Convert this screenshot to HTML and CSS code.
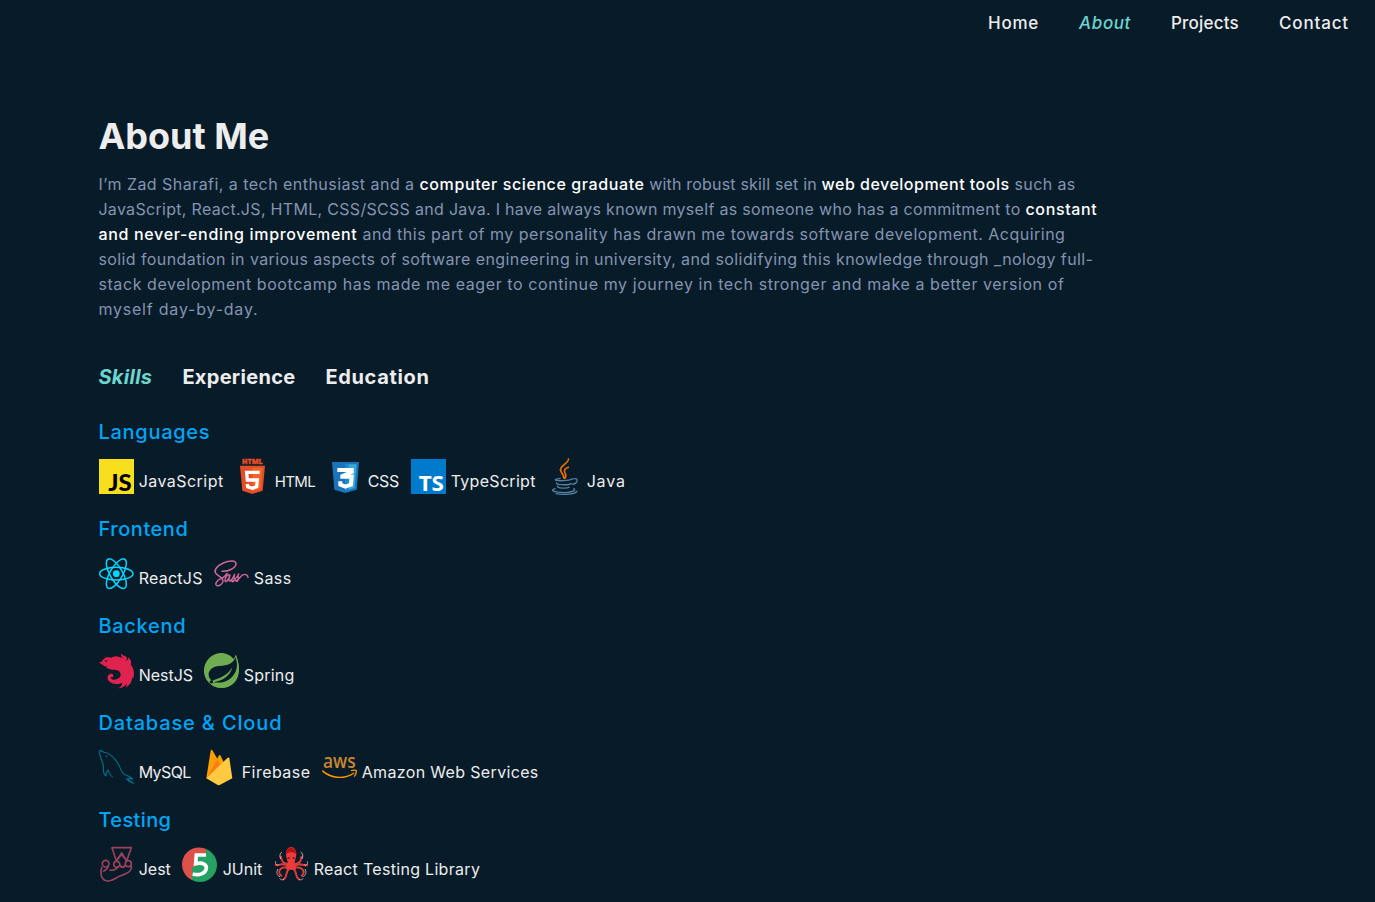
FILE: index.html
```
<!DOCTYPE html>
<html lang="en">
<head>
<meta charset="utf-8">
<title>About Me</title>
<link rel="stylesheet" href="styles.css">
</head>
<body>
<nav class="nav">
  <a class="nav-home">Home</a><a class="nav-about active">About</a><a class="nav-projects">Projects</a><a class="nav-contact">Contact</a>
</nav>
<main class="about">
  <h1 class="title">About Me</h1>
  <p class="bio">
    <span class="line"><span class="t46">I’m Zad Sharafi, a tech enthusiast and a </span><strong class="t60">computer science graduate</strong><span class="t19"> with robust skill set in </span><strong class="t49">web development tools</strong><span class="t38"> such as</span></span>
    <span class="line"><span class="t30">JavaScript, React.JS, HTML, CSS/SCSS and Java. I have always known myself as someone who has a commitment to </span><strong class="t65">constant</strong></span>
    <span class="line"><strong class="t68">and never-ending improvement</strong><span class="t49">&nbsp;and this part of my personality has drawn me towards software development. Acquiring</span></span>
    <span class="line t41">solid foundation in various aspects of software engineering in university, and solidifying this knowledge through _nology full-</span>
    <span class="line t59">stack development bootcamp has made me eager to continue my journey in tech stronger and make a better version of</span>
    <span class="line t79">myself day-by-day.</span>
  </p>
  <div class="tabs"><a class="active t30">Skills</a><a class="t30">Experience</a><a class="t65">Education</a></div>

  <section class="group">
    <h3 class="t73">Languages</h3>
    <div class="items">
      <div class="item w136">
        <svg class="icon" viewBox="27 27 105 105"><rect x="27" y="27" width="105" height="105" fill="#f7df1e"/><text class="logo js" x="55" y="122" font-size="66" textLength="70" lengthAdjust="spacingAndGlyphs">JS</text></svg>
        <span class="label t46">JavaScript</span>
      </div>
      <div class="item w93">
        <svg class="icon" viewBox="435 27 105 105"><text class="logo heavy" x="456" y="41" font-size="18" textLength="62" lengthAdjust="spacingAndGlyphs" fill="#e44d26" stroke="#e44d26">HTML</text><path fill="#e44d26" d="M450 47h75l-7 75-31 10-30-10z"/><path fill="#f16529" d="M487 53h31l-6 64-25 8z"/><path fill="none" stroke="#fff" stroke-width="10" d="M509 67h-39l2 23h30l-2 20-13 5-14-5-1-8"/></svg>
        <span class="label html">HTML</span>
      </div>
      <div class="item w83">
        <svg class="icon" viewBox="24 27 105 105"><path fill="#1b73ba" d="M36 36h81l-7 83-34 10-33-10z"/><path fill="#35a9dc" d="M76 43h34l-6 71-28 8z"/><path fill="#1c88c7" d="M76 43h10v78l-10 3z"/><path fill="none" stroke="#fff" stroke-width="12" d="M52 60h43v6L67 78v2h28l-2 24-17 6-15-6v-10"/></svg>
        <span class="label css">CSS</span>
      </div>
      <div class="item w136">
        <svg class="icon" viewBox="273 27 105 105"><rect x="273" y="27" width="105" height="105" fill="#007acc"/><text class="logo" x="296" y="122" font-size="64" textLength="76" lengthAdjust="spacingAndGlyphs" fill="#fff">TS</text></svg>
        <span class="label t30">TypeScript</span>
      </div>
      <div class="item">
        <svg class="icon" viewBox="51 27 105 105"><g fill="none" stroke="#e76f00" stroke-width="5"><path d="M115 25c6 14-32 23-22 40 4 7 9 11 9 21M117 51c-12 4-17 10-12 18 5 7 3 12-2 18"/></g><g fill="none" stroke="#5382a1" stroke-width="4"><path d="M92 85c-28 4-16 8 10 7 14 0 22-3 29-6M132 86c15-3 11 16-6 17M80 97c-7 9 36 9 45 3M83 107c-5 9 28 9 36 4M77 116c-35 9 38 17 55 6 4-3 1-6-2-7M77 131c25 4 62 2 64-8"/></g></svg>
        <span class="label t80">Java</span>
      </div>
    </div>
  </section>

  <section class="group">
    <h3 class="t56">Frontend</h3>
    <div class="items">
      <div class="item w115">
        <svg class="icon" viewBox="27 18 105 105"><circle cx="79" cy="71" r="10" fill="#00d8ff"/><g fill="none" stroke="#00d8ff" stroke-width="4.5"><ellipse cx="79" cy="71" rx="50" ry="19"/><ellipse cx="79" cy="71" rx="50" ry="19" transform="rotate(60 79 71)"/><ellipse cx="79" cy="71" rx="50" ry="19" transform="rotate(120 79 71)"/></g></svg>
        <span class="label t24">ReactJS</span>
      </div>
      <div class="item">
        <svg class="icon" viewBox="372 18 105 105"><g fill="none" stroke="#cd6799" stroke-width="4.5" stroke-linecap="round" stroke-linejoin="round"><path d="M396 64c19 1 42-10 42-23 0-10-20-10-38-2-18 8-28 20-24 29 5 10 23 14 23 25 0 9-12 16-18 14-8-3-2-15 12-21 8-4 15-9 18-16"/><path d="M420 76c-6-5-14 4-15 15 1 9 10 1 15-15-4 11-4 17-1 17 6-1 10-9 15-20-6 4 2 12-2 19-3 5-6 3-7 1 8 1 16-12 21-21-6 4 2 12-2 19-3 5-6 3-7 1 8 1 12-11 20-17 12-5 16 1 17 7"/></g></svg>
        <span class="label t46">Sass</span>
      </div>
    </div>
  </section>

  <section class="group">
    <h3 class="t73">Backend</h3>
    <div class="items">
      <div class="item w105">
        <svg class="icon" viewBox="27 24 105 105"><path fill="#e0234e" d="M27 53c7-1 9-5 12-9 7-8 15-8 23-6 9-5 18-6 27-2 4 1 7 3 10 4-6-5-7-10-4-15 1 8 10 7 14 11 5 4 1 9-3 11 8 0 10-5 8-10 8 6 11 13 9 23 10 12 11 29 6 43l-3-8c1 15-7 26-20 33 3-4 4-8 4-12-7 9-14 13-25 14 8-5 11-10 12-17-14 7-32 4-40-4-7-8-5-20 3-22 8-2 13 4 9 9-3 2-5 0-7 1 0 7 11 9 19 5 9-3 13-10 10-18-4-10-14-10-24-10-10-1-16-3-19-8l8-2c-8 1-14 1-16-3z"/><path d="M43 46l10 1-5 4z" fill="#081b29"/></svg>
        <span class="label">NestJS</span>
      </div>
      <div class="item">
        <svg class="icon" viewBox="342 24 105 105"><path fill="#70ad51" d="M437 30c7 20 15 46 5 69-8 19-27 30-47 30-17 0-32-7-42-20-22-29-9-68 22-81 22-9 43-1 56 14 3-4 5-8 6-12z"/><path fill="#081b29" d="M437 37c-12 27-34 24-56 27-24 4-31 25-20 39l5 5c22-9 45-14 61-41-7 27-29 40-57 45 41 5 59-15 68-35 4-12 4-24-1-40z"/><circle cx="364" cy="111" r="5" fill="#081b29"/><path fill="none" stroke="#70ad51" stroke-width="3" d="M437 31c9 25 12 45 2 69-8 17-24 27-44 27-13 0-24-3-34-12"/></svg>
        <span class="label t24">Spring</span>
      </div>
    </div>
  </section>

  <section class="group">
    <h3 class="t84">Database &amp; Cloud</h3>
    <div class="items">
      <div class="item w103">
        <svg class="icon" viewBox="27 24 105 105"><g fill="none" stroke="#00758f" stroke-width="3.2" stroke-linejoin="round"><path d="M48 102c-11-8-7-20-8-31-1-10-8-20-9-29-3-7-6-14-2-16 4-1 9 2 13 5 18 1 32 18 43 35 10 19 9 29 23 34 11 3 14 7 20 11-8-2-14-3-16 0 6 6 13 8 18 13-8-4-17-6-21-15M48 102c0-7 2-13 6-18 4 9 7 17 14 22M48 42l3 3"/></g></svg>
        <span class="label mysql">MySQL</span>
      </div>
      <div class="item w120">
        <svg class="icon" viewBox="336 24 105 105"><path fill="#ffa000" d="m349 109 13-83q2-5 6 0l14 24 4-9q3-4 6 0l29 63z"/><path fill="#f57f17" d="m349 109 33-58 12 25z"/><path fill="#ffca42" d="m349 109 63-61q4-3 6 1l9 60-38 20q-3 1-6 0z"/></svg>
        <span class="label t46">Firebase</span>
      </div>
      <div class="item">
        <svg class="icon" viewBox="696 24 105 105"><text class="aws" x="699" y="78" font-size="61" textLength="98" lengthAdjust="spacingAndGlyphs" fill="#c9862d">aws</text><path fill="#f90" d="M698 85c29 24 65 24 92 7 3-1 4 1 2 3-27 19-68 18-95-6-2-2-1-4 1-4z"/><path fill="none" stroke="#f90" stroke-width="4" d="M783 86c11-3 17-2 16 2 0 6-2 11-6 16"/></svg>
        <span class="label t35">Amazon Web Services</span>
      </div>
    </div>
  </section>

  <section class="group">
    <h3 class="t38">Testing</h3>
    <div class="items">
      <div class="item w84">
        <svg class="icon" viewBox="27 21 105 105"><g fill="none" stroke="#99425b" stroke-width="5" stroke-linejoin="round"><path d="M66 23h58l-14 39-15-23-16 23zM79 63l16-20 15 20M36 80c-7 17-4 41 17 43 14 1 23-9 37-15 20-7 36-12 34-32M55 77c0 8-8 13-16 18M58 90c8 2 23-1 27-10M89 75c5 9 12 9 17 0"/><circle cx="47" cy="71" r="10"/><circle cx="80" cy="73" r="9"/><circle cx="115" cy="71" r="9"/></g></svg>
        <span class="label">Jest</span>
      </div>
      <div class="item w91">
        <svg class="icon" viewBox="279 21 105 105"><circle cx="330" cy="75" r="51" fill="#25a162"/><path fill="#dc524a" d="M306 120a51 51 0 0 1 42-93v14h-32v40h-10z"/><path fill="none" stroke="#fff" stroke-width="11" d="M348 45h-29l-2 26c49-11 38 43-9 31"/></svg>
        <span class="label">JUnit</span>
      </div>
      <div class="item">
        <svg class="icon" viewBox="552 21 105 105"><g fill="none" stroke="#d93a3a" stroke-width="6" stroke-linecap="round"><path d="M598 72c-21 1-24-11-25-22M609 72c22 0 25-11 25-21M597 78c-25-13-31 2-40-3M610 78c25-13 33 3 42-3M598 82c-34-4-35 18-24 25M609 82c35-3 36 17 26 25M600 85c-16 7-5 23-19 33M607 85c17 7 5 23 20 33"/></g><path fill="#ed3b3b" d="M588 43c0-29 31-29 31 0 0 12-5 16-5 26 0 9 7 13 3 20H590c-5-7 3-11 3-20 0-10-5-14-5-26z"/><path fill="#b51218" d="M588 42c1-26 30-26 31 0-9-7-22-7-31 0z"/><g fill="none" stroke="#f0b3b3" stroke-width="2.5"><path d="M576 36c-7 4-8 13-4 21M632 36c7 4 8 13 4 21M557 64c-2 9 3 13 10 10M652 64c2 9-3 13-10 10M570 110c-10-3-12-15-6-23M638 110c10-3 12-15 7-23M582 118c-6 3-11 1-13-3M627 118c6 3 11 1 12-3"/></g><path stroke="#6e171b" stroke-width="4" d="M593 54h6M608 54h6"/></svg>
        <span class="label t30">React Testing Library</span>
      </div>
    </div>
  </section>
</main>
</body>
</html>
```
FILE: styles.css
```
body {
  margin: 0;
  height: 902px;
  overflow: hidden;
  background: #081b29;
  color: #ededed;
  font: 16px/25px Inter, "Liberation Sans", sans-serif;
}
.nav {
  display: flex;
  gap: 40px;
  justify-content: flex-end;
  padding: 10px 26px 0;
  font-size: 17px;
  line-height: 26px;
  font-weight: 500;
}
.nav-home { letter-spacing: .746px; }
.nav-about { letter-spacing: .6px; }
.nav-projects { letter-spacing: .211px; }
.nav-contact { letter-spacing: .844px; }
.active { color: #6bd6cf; font-style: italic; }

.about { padding: 73px 98px 0 98.4px; }
.title { margin: 0; font-size: 36px; line-height: 54px; font-weight: 700; }
.bio { margin: 9px 0 0; color: #8494b0; }
.bio strong { font-weight: 500; color: #fff; }
.line { display: block; white-space: pre; }

.tabs {
  display: flex;
  gap: 30px;
  margin-top: 40px;
  font-size: 20px;
  line-height: 30px;
  font-weight: 700;
}
.group { margin-top: 20px; }
.tabs + .group { margin-top: 25px; }
.group h3 {
  margin: 0 0 12px;
  font-size: 20px;
  line-height: 30px;
  font-weight: 500;
  color: #00a6f6;
}
.items { display: flex; height: 35px; padding-left: .6px; }
.item { display: flex; gap: 4.7px; flex-shrink: 0; }
.icon { width: 35px; height: 35px; flex-shrink: 0; overflow: visible; }
.label { padding-top: 10px; white-space: nowrap; }
.w83 { width: 83px; }
.w84 { width: 84px; }
.w91 { width: 91px; }
.w93 { width: 93px; }
.w103 { width: 103px; }
.w105 { width: 105px; }
.w115 { width: 115px; }
.w120 { width: 120px; }
.w136 { width: 136px; }

/* lettering inside the logos */
.logo { font-family: "Noto Sans", sans-serif; font-weight: 700; }
.js { font-family: Lato, sans-serif; font-weight: 900; }
.heavy { font-weight: 900; stroke-width: 1; }
.aws { font-family: "Open Sans", sans-serif; font-weight: 600; }

/* tracking */
.html { letter-spacing: -.6px; font-size: 15px; }
.css { letter-spacing: -.3px; }
.mysql { letter-spacing: -.6px; }
.t19 { letter-spacing: .187px; }
.t24 { letter-spacing: .24px; }
.t30 { letter-spacing: .305px; }
.t35 { letter-spacing: .346px; }
.t38 { letter-spacing: .384px; }
.t41 { letter-spacing: .409px; }
.t46 { letter-spacing: .46px; }
.t49 { letter-spacing: .495px; }
.t56 { letter-spacing: .563px; }
.t59 { letter-spacing: .59px; }
.t60 { letter-spacing: .601px; }
.t65 { letter-spacing: .646px; }
.t68 { letter-spacing: .681px; }
.t73 { letter-spacing: .73px; }
.t79 { letter-spacing: .791px; }
.t80 { letter-spacing: .805px; }
.t84 { letter-spacing: .85px; }
```
